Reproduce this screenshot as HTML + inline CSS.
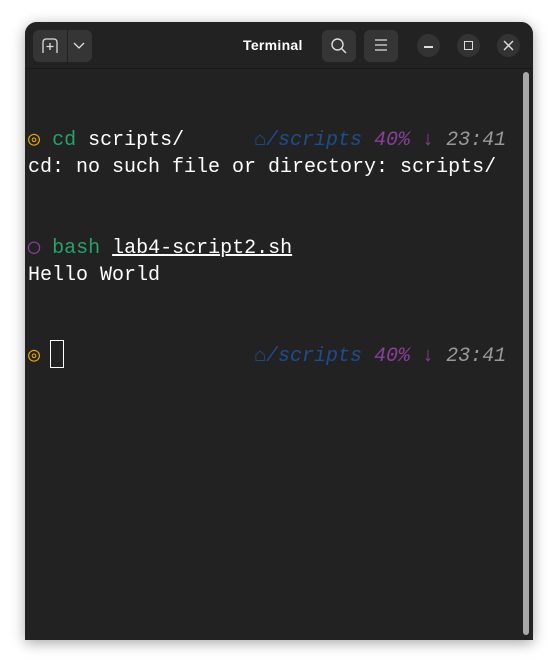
<!DOCTYPE html>
<html><head><meta charset="utf-8"><style>
*{margin:0;padding:0;box-sizing:border-box}
body{width:558px;height:668px;background:#fff;position:relative;overflow:hidden;font-family:"Liberation Sans",sans-serif}
.win{position:absolute;left:25px;top:22px;width:508px;height:618px;background:#222;border-radius:12px 12px 0 0;box-shadow:0 3px 14px rgba(0,0,0,.35);overflow:hidden}
.hdr{position:absolute;left:0;top:0;width:508px;height:47px;background:#222;border-bottom:1px solid #181818}
.btn{position:absolute;background:#353535;border-radius:6px}
.circ{position:absolute;width:23px;height:23px;border-radius:50%;background:#333;top:12px}
.title{position:absolute;left:218px;top:15px;color:#fff;font-weight:bold;font-size:14px;letter-spacing:0.3px}
.term{position:absolute;left:3px;top:51px;font-family:"Liberation Mono",monospace;font-size:20px;line-height:27px;color:#fff;white-space:pre}
.r{position:absolute;font-family:"Liberation Mono",monospace;font-size:20px;line-height:27px;white-space:pre;font-style:italic;left:229px}
.g{color:#26a269}.y{color:#e5a50a}.b{color:#1c4d8c}.p{color:#8a3f9a}.gr{color:#999}
.sb{position:absolute;left:498px;top:50px;width:6px;height:563px;background:#a8a8a8;border-radius:3px}
</style></head><body>
<div class="win">
 <div class="hdr">
  <div class="btn" style="left:8px;top:8px;width:59px;height:32px"></div>
  <div style="position:absolute;left:42px;top:8px;width:1px;height:32px;background:#222"></div>
  <svg style="position:absolute;left:16px;top:15px" width="18" height="18" viewBox="0 0 18 18" fill="none" stroke="#ddd" stroke-width="1.3"><path d="M2 16V5a3 3 0 0 1 3-3h8a3 3 0 0 1 3 3v11M9 6v7M5.5 9.5h7"/></svg>
  <svg style="position:absolute;left:48px;top:18px" width="12" height="10" viewBox="0 0 12 10" fill="none" stroke="#ddd" stroke-width="1.3"><path d="M1 3l5 5 5-5"/></svg>
  <div class="title">Terminal</div>
  <div class="btn" style="left:297px;top:8px;width:34px;height:32px"></div>
  <svg style="position:absolute;left:305px;top:15px" width="18" height="18" viewBox="0 0 18 18" fill="none" stroke="#ddd" stroke-width="1.4"><circle cx="7.5" cy="7.5" r="5.5"/><path d="M11.5 11.5l4.5 4.5"/></svg>
  <div class="btn" style="left:339px;top:8px;width:34px;height:32px"></div>
  <svg style="position:absolute;left:348px;top:16px" width="16" height="14" viewBox="0 0 16 14" fill="none" stroke="#ddd" stroke-width="1.3"><path d="M2 2h12M2 7h12M2 12h12"/></svg>
  <div class="circ" style="left:392px"></div>
  <div style="position:absolute;left:399px;top:24px;width:9px;height:1.5px;background:#ddd"></div>
  <div class="circ" style="left:432px"></div>
  <div style="position:absolute;left:439px;top:19px;width:9px;height:9px;border:1.5px solid #ddd"></div>
  <div class="circ" style="left:472px"></div>
  <svg style="position:absolute;left:478px;top:18px" width="11" height="11" viewBox="0 0 11 11" stroke="#ddd" stroke-width="1.4"><path d="M1 1l9 9M10 1l-9 9"/></svg>
 </div>
 <div class="term">

<span class="y">◎</span> <span class="g">cd</span> scripts/
cd: no such file or directory: scripts/


<span class="p">◯</span> <span class="g">bash</span> <span style="text-decoration:underline">lab4-script2.sh</span>
Hello World


<span class="y">◎</span> </div>
 <div style="position:absolute;left:25px;top:318px;width:14px;height:28px;border:1.5px solid #fff"></div>
 <div class="r" style="top:105px"><span class="b">⌂/scripts</span> <span class="p">40% ↓</span> <span class="gr">23:41</span></div>
 <div class="r" style="top:321px"><span class="b">⌂/scripts</span> <span class="p">40% ↓</span> <span class="gr">23:41</span></div>
 <div class="sb"></div>
</div>
</body></html>
